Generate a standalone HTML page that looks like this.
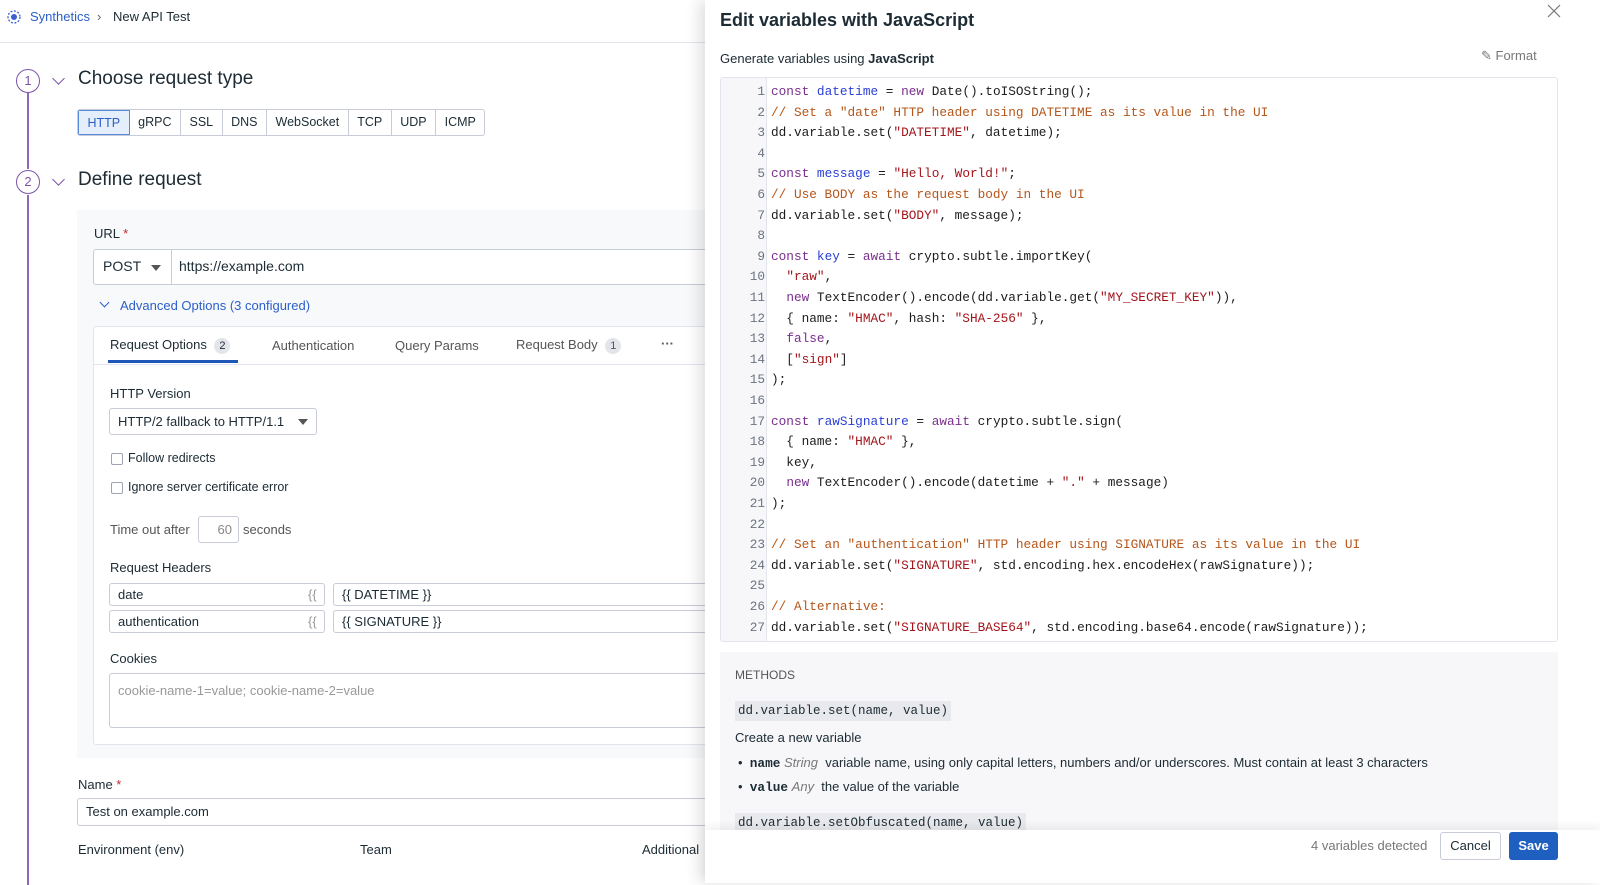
<!DOCTYPE html>
<html><head><meta charset="utf-8"><style>
*{box-sizing:border-box;margin:0;padding:0}
body{width:1600px;height:883px;overflow:hidden;background:#fff;font-family:"Liberation Sans",sans-serif;color:#1c2b34;position:relative;font-size:13px}
.abs{position:absolute}
.hdr{left:0;top:0;width:1600px;height:43px;border-bottom:1px solid #e2e5ed}
.step{width:24px;height:24px;border:1.5px solid #7b54a8;border-radius:50%;color:#7b54a8;font-size:13px;text-align:center;line-height:21px;background:#fff}
.vline{left:27px;width:2px;background:#8d68b8}
.chev{width:9px;height:9px;border-right:1.5px solid #7b54a8;border-bottom:1.5px solid #7b54a8;transform:rotate(45deg)}
h2{font-weight:normal;font-size:19px;color:#1c2b34}
.seg{left:77px;top:109px;height:27px;display:flex;border:1px solid #c8cbd8;border-radius:3px;overflow:hidden}
.seg div{padding:0 8.5px;line-height:25px;border-right:1px solid #c8cbd8;font-size:12.5px}
.seg div:last-child{border-right:none}
.inp{border:1px solid #c8cbd8;border-radius:3px;background:#fff}
.cb{width:12px;height:12px;border:1px solid #9ea3b3;border-radius:2px;background:#fff}
.code{font-family:"Liberation Mono",monospace;font-size:12.75px}
.ln{position:absolute;left:0;width:44px;text-align:right;color:#6c737f}
.cl{position:absolute;left:50px;white-space:pre;color:#1c1c1c}
.k{color:#7a2e8e}.v{color:#2a3fd4}.s{color:#a3151b}.c{color:#b5561a}
</style></head><body>
<div class="abs hdr"></div>
<svg class="abs" style="left:7px;top:10px" width="14" height="14" viewBox="0 0 14 14"><circle cx="7" cy="7" r="3" fill="#3a5fd0"/><circle cx="7" cy="7" r="6" fill="none" stroke="#3a5fd0" stroke-width="1.3" stroke-dasharray="2 1.5"/></svg>
<div class="abs" style="left:30px;top:9px;font-size:13px;color:#2b5fc8">Synthetics</div>
<div class="abs" style="left:97px;top:9px;font-size:13px;color:#666">›</div>
<div class="abs" style="left:113px;top:9px;font-size:13px">New API Test</div>

<div class="abs vline" style="top:93px;height:76px"></div>
<div class="abs vline" style="top:195px;height:690px"></div>
<div class="abs step" style="left:16px;top:69px">1</div>
<div class="abs step" style="left:16px;top:170px">2</div>
<div class="abs chev" style="left:54px;top:74px"></div>
<div class="abs chev" style="left:54px;top:175px"></div>
<h2 class="abs" style="left:78px;top:68px">Choose request type</h2>
<h2 class="abs" style="left:78px;top:169px">Define request</h2>
<div class="abs seg"><div style="background:#e5eefb;color:#2b5fc8;border:1px solid #5b8ad8">HTTP</div><div>gRPC</div><div>SSL</div><div>DNS</div><div>WebSocket</div><div>TCP</div><div>UDP</div><div>ICMP</div></div>

<div class="abs" style="left:77px;top:210px;width:640px;height:548px;background:#f8f9fb"></div>
<div class="abs" style="left:94px;top:226px;font-size:13px">URL <span style="color:#c0282d">*</span></div>
<div class="abs inp" style="left:93px;top:249px;width:630px;height:36px"></div>
<div class="abs" style="top:249px;width:1px;height:36px;background:#c8cbd8;left:171px"></div>
<div class="abs" style="left:103px;top:258px;font-size:14px">POST</div>
<div class="abs" style="left:151px;top:265px;border:5px solid transparent;border-top:6px solid #555"></div>
<div class="abs" style="left:179px;top:258px;font-size:14px">https://example.com</div>
<div class="abs" style="left:101px;top:299px;width:7px;height:7px;border-right:1.3px solid #2b5fc8;border-bottom:1.3px solid #2b5fc8;transform:rotate(45deg)"></div>
<div class="abs" style="left:120px;top:298px;color:#2b5fc8;font-size:13px">Advanced Options (3 configured)</div>
<div class="abs" style="left:93px;top:326px;width:630px;height:419px;background:#fff;border:1px solid #e2e5ed;border-radius:3px"></div>
<div class="abs" style="left:93px;top:364px;width:630px;height:1px;background:#e2e5ed"></div>
<div class="abs" style="left:110px;top:337px">Request Options <span style="display:inline-block;width:16px;height:16px;border-radius:8px;background:#e3e5ea;text-align:center;line-height:16px;font-size:11px;margin-left:4px">2</span></div>
<div class="abs" style="left:108px;top:360px;width:130px;height:3px;background:#1f57b8"></div>
<div class="abs" style="left:272px;top:338px;color:#555">Authentication</div>
<div class="abs" style="left:395px;top:338px;color:#555">Query Params</div>
<div class="abs" style="left:516px;top:337px;color:#555">Request Body <span style="display:inline-block;width:16px;height:16px;border-radius:8px;background:#e3e5ea;text-align:center;line-height:16px;font-size:11px;margin-left:4px">1</span></div>
<div class="abs" style="left:661px;top:336px;font-weight:bold;color:#555">···</div>
<div class="abs" style="left:110px;top:386px">HTTP Version</div>
<div class="abs inp" style="left:109px;top:408px;width:208px;height:27px"></div>
<div class="abs" style="left:118px;top:414px">HTTP/2 fallback to HTTP/1.1</div>
<div class="abs" style="left:298px;top:419px;border:5px solid transparent;border-top:6px solid #555"></div>
<div class="abs cb" style="left:111px;top:453px"></div><div class="abs" style="left:128px;top:451px;font-size:12.5px">Follow redirects</div>
<div class="abs cb" style="left:111px;top:482px"></div><div class="abs" style="left:128px;top:480px;font-size:12.5px">Ignore server certificate error</div>
<div class="abs" style="left:110px;top:522px;color:#555">Time out after</div>
<div class="abs inp" style="left:198px;top:516px;width:41px;height:27px;color:#888;text-align:right;padding:5px 6px 0 0">60</div>
<div class="abs" style="left:243px;top:522px;color:#555">seconds</div>
<div class="abs" style="left:110px;top:560px">Request Headers</div>
<div class="abs inp" style="left:109px;top:583px;width:216px;height:23px"></div>
<div class="abs inp" style="left:333px;top:583px;width:390px;height:23px"></div>
<div class="abs inp" style="left:109px;top:610px;width:216px;height:23px"></div>
<div class="abs inp" style="left:333px;top:610px;width:390px;height:23px"></div>
<div class="abs" style="left:118px;top:587px">date</div><div class="abs" style="left:308px;top:587px;color:#999">{{</div>
<div class="abs" style="left:118px;top:614px">authentication</div><div class="abs" style="left:308px;top:614px;color:#999">{{</div>
<div class="abs" style="left:342px;top:587px">{{ DATETIME }}</div>
<div class="abs" style="left:342px;top:614px">{{ SIGNATURE }}</div>
<div class="abs" style="left:110px;top:651px">Cookies</div>
<div class="abs inp" style="left:109px;top:673px;width:614px;height:55px"></div>
<div class="abs" style="left:118px;top:683px;color:#999">cookie-name-1=value; cookie-name-2=value</div>
<div class="abs" style="left:78px;top:777px">Name <span style="color:#c0282d">*</span></div>
<div class="abs inp" style="left:77px;top:798px;width:640px;height:28px"></div>
<div class="abs" style="left:86px;top:804px">Test on example.com</div>
<div class="abs" style="left:78px;top:842px">Environment (env)</div>
<div class="abs" style="left:360px;top:842px">Team</div>
<div class="abs" style="left:642px;top:842px">Additional</div>

<div class="abs" style="left:705px;top:0;width:895px;height:883px;background:#fff;box-shadow:-6px 0 14px rgba(0,0,0,0.12)"></div>
<div class="abs" style="left:720px;top:10px;font-size:18px;font-weight:bold;color:#1c2b34">Edit variables with JavaScript</div>
<svg class="abs" style="left:1547px;top:4px" width="14" height="14" viewBox="0 0 14 14"><path d="M1 1L13 13M13 1L1 13" stroke="#777" stroke-width="1.2"/></svg>
<div class="abs" style="left:720px;top:51px;font-size:13px">Generate variables using <b>JavaScript</b></div>
<div class="abs" style="left:1481px;top:48px;font-size:13px;color:#777">✎ Format</div>
<div class="abs" style="left:720px;top:77px;width:838px;height:565px;border:1px solid #e2e5ed;border-radius:3px;background:#fff;overflow:hidden">
 <div class="abs" style="left:0;top:0;width:46px;height:565px;background:#f7f7f9;border-right:1px solid #e2e5ed"></div>
 <div class="code" id="code"></div>
</div>
<div class="abs" style="left:720px;top:652px;width:838px;height:178px;background:#f7f7f9;overflow:hidden">
 <div class="abs" style="left:15px;top:16px;font-size:12px;color:#555">METHODS</div>
 <div class="abs code" style="left:15px;top:49px;background:#e8e9ec;padding:3px 3px;font-size:12.5px">dd.variable.set(name, value)</div>
 <div class="abs" style="left:15px;top:78px;font-size:13px">Create a new variable</div>
 <div class="abs" style="left:18px;top:103px;font-size:13px">•&nbsp; <b class="code">name</b> <i style="color:#777">String</i>&nbsp; variable name, using only capital letters, numbers and/or underscores. Must contain at least 3 characters</div>
 <div class="abs" style="left:18px;top:127px;font-size:13px">•&nbsp; <b class="code">value</b> <i style="color:#777">Any</i>&nbsp; the value of the variable</div>
 <div class="abs code" style="left:15px;top:161px;background:#e8e9ec;padding:3px 3px;font-size:12.5px">dd.variable.setObfuscated(name, value)</div>
</div>
<div class="abs" style="left:705px;top:830px;width:895px;height:53px;background:#fff;box-shadow:0 -4px 8px rgba(0,0,0,0.06)"></div>
<div class="abs" style="left:1311px;top:838px;color:#777;font-size:13px">4 variables detected</div>
<div class="abs" style="left:1440px;top:832px;width:61px;height:28px;border:1px solid #c8cbd8;border-radius:3px;text-align:center;line-height:26px">Cancel</div>
<div class="abs" style="left:1509px;top:832px;width:49px;height:28px;background:#1f5fbf;border-radius:3px;color:#fff;text-align:center;line-height:28px;font-weight:bold">Save</div>

<script>
var L=[
'<span class="k">const</span> <span class="v">datetime</span> = <span class="k">new</span> Date().toISOString();',
'<span class="c">// Set a "date" HTTP header using DATETIME as its value in the UI</span>',
'dd.variable.set(<span class="s">"DATETIME"</span>, datetime);',
'',
'<span class="k">const</span> <span class="v">message</span> = <span class="s">"Hello, World!"</span>;',
'<span class="c">// Use BODY as the request body in the UI</span>',
'dd.variable.set(<span class="s">"BODY"</span>, message);',
'',
'<span class="k">const</span> <span class="v">key</span> = <span class="k">await</span> crypto.subtle.importKey(',
'  <span class="s">"raw"</span>,',
'  <span class="k">new</span> TextEncoder().encode(dd.variable.get(<span class="s">"MY_SECRET_KEY"</span>)),',
'  { name: <span class="s">"HMAC"</span>, hash: <span class="s">"SHA-256"</span> },',
'  <span class="k">false</span>,',
'  [<span class="s">"sign"</span>]',
');',
'',
'<span class="k">const</span> <span class="v">rawSignature</span> = <span class="k">await</span> crypto.subtle.sign(',
'  { name: <span class="s">"HMAC"</span> },',
'  key,',
'  <span class="k">new</span> TextEncoder().encode(datetime + <span class="s">"."</span> + message)',
');',
'',
'<span class="c">// Set an "authentication" HTTP header using SIGNATURE as its value in the UI</span>',
'dd.variable.set(<span class="s">"SIGNATURE"</span>, std.encoding.hex.encodeHex(rawSignature));',
'',
'<span class="c">// Alternative:</span>',
'dd.variable.set(<span class="s">"SIGNATURE_BASE64"</span>, std.encoding.base64.encode(rawSignature));'];
var h='';for(var i=0;i<L.length;i++){var t=6+i*20.6;h+='<div class="ln" style="top:'+t+'px">'+(i+1)+'</div><div class="cl" style="top:'+t+'px">'+L[i]+'</div>';}
document.getElementById('code').innerHTML=h;
</script>
</body></html>
